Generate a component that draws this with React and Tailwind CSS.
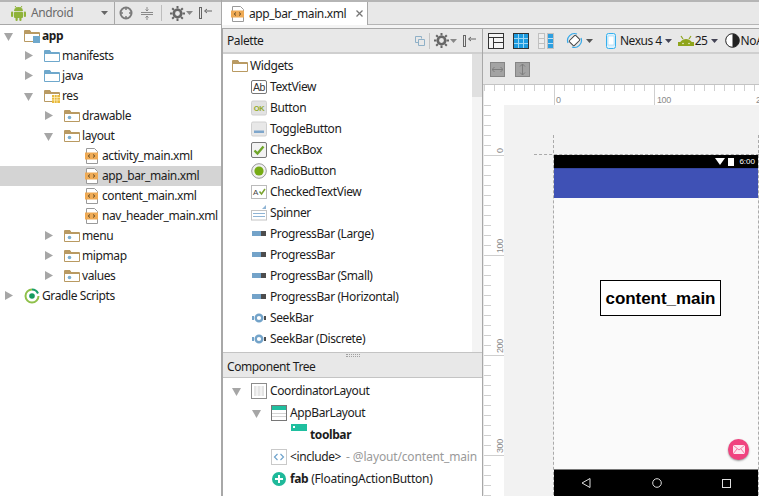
import React from "react";

const FOLDER_BROWN = "#b99a62";

function Arrow({ open }) {
  return (
    <svg width="12" height="12" viewBox="0 0 12 12" className="shrink-0">
      {open ? <path d="M1 3h9l-4.500 8z" fill="#a6a6a6" /> : <path d="M2 1v9l8-4.500z" fill="#a6a6a6" />}
    </svg>
  );
}

function Folder({ color = FOLDER_BROWN, badge }) {
  return (
    <svg width="16" height="14" viewBox="0 0 16 14" className="shrink-0">
      <path d="M.5 1.500h5l1.500 2h8.500v9H.5z" fill="#fff" stroke={color} />
      <path d="M1 1h5l1.500 2.500H15V5H1z" fill={color} />
      {badge === "dot" && <circle cx="5.500" cy="8.500" r="1.800" fill="#7aaed0" />}
      {badge === "square" && <rect x="9" y="7" width="7" height="7" fill="#6fa8cc" />}
      {badge === "grid" && (
        <g>
          <rect x="8" y="6" width="8" height="8" fill="#e8b93c" />
          <path d="M8 8.500h8M8 11h8M10.500 6v8M13 6v8" stroke="#fff3c8" strokeWidth=".7" />
        </g>
      )}
    </svg>
  );
}

function XmlIcon() {
  return (
    <svg width="14" height="16" viewBox="0 0 14 16" className="mr-px shrink-0">
      <path d="M1.500.5h8l3 3v12h-11z" fill="#fff" stroke="#9a9a9a" />
      <rect x="0" y="4.500" width="13" height="7" fill="#eeaa55" />
      <path d="M5 6.500 3.200 8 5 9.500M8 6.500 9.800 8 8 9.500" fill="none" stroke="#4d3b1f" strokeWidth=".9" />
    </svg>
  );
}

function GradleIcon() {
  return (
    <svg width="16" height="16" viewBox="0 0 16 16" className="shrink-0">
      <path d="M8 1.500a6.500 6.500 0 1 0 6.500 6.500" fill="none" stroke="#8fc04a" strokeWidth="2" />
      <path d="M8 1.500a6.500 6.500 0 0 1 6 4" fill="none" stroke="#1a9e6a" strokeWidth="2" />
      <circle cx="8" cy="8" r="2.800" fill="#159a5e" />
    </svg>
  );
}

function AndroidHead() {
  return (
    <svg width="16" height="12" viewBox="0 0 16 12" className="block shrink-0">
      <path d="M1 11a7 7 0 0 1 14 0z" fill="#8fa51c" />
      <path d="M3 1l2 3M13 1l-2 3" stroke="#8fa51c" strokeWidth="1.200" />
      <rect x="0" y="7" width="16" height="4" fill="#8fa51c" />
      <circle cx="5" cy="8.500" r=".7" fill="#fff" />
      <circle cx="11" cy="8.500" r=".7" fill="#fff" />
    </svg>
  );
}

function AndroidFull() {
  return (
    <svg width="15" height="16" viewBox="0 0 15 16" className="shrink-0">
      <path d="M4 1l1.500 2M11 1 9.500 3" stroke="#8fb339" />
      <path d="M3 6a4.500 4 0 0 1 9 0z" fill="#8fb339" />
      <rect x="3" y="6.700" width="9" height="6.300" rx="1" fill="#8fb339" />
      <rect x="0" y="6.500" width="2.200" height="5.500" rx="1" fill="#8fb339" />
      <rect x="12.800" y="6.500" width="2.200" height="5.500" rx="1" fill="#8fb339" />
      <rect x="4.500" y="12" width="2.200" height="4" rx="1" fill="#8fb339" />
      <rect x="8.300" y="12" width="2.200" height="4" rx="1" fill="#8fb339" />
    </svg>
  );
}

function Caret({ color = "#555" }) {
  return (
    <svg width="7" height="4" viewBox="0 0 7 4" className="block shrink-0">
      <path d="M0 0h7L3.500 4z" fill={color} />
    </svg>
  );
}

function Gear() {
  return (
    <svg width="15" height="15" viewBox="0 0 15 15" className="shrink-0">
      <circle cx="7.500" cy="7.500" r="3.700" fill="none" stroke="#666" strokeWidth="2.600" />
      <path d="M7.500 0v15M0 7.500h15M2.200 2.200l10.600 10.600M12.800 2.200 2.200 12.800" stroke="#666" strokeWidth="2" strokeDasharray="2.500 10 2.500" />
    </svg>
  );
}

function PinLeft() {
  return (
    <svg width="14" height="12" viewBox="0 0 14 12" className="block shrink-0">
      <rect x=".5" y=".5" width="2" height="11" fill="none" stroke="#666" />
      <path d="M13 4H6M8 2 5.500 4 8 6" fill="none" stroke="#666" />
    </svg>
  );
}

function TreeRow({ indent, arrow, icon, children, selected, bold }) {
  return (
    <div className={`flex h-5 items-center ${indent} ${selected ? "bg-[#d4d4d4]" : ""}`}>
      {arrow !== undefined && (
        <div className="flex w-[21px] shrink-0 justify-start">
          <Arrow open={arrow} />
        </div>
      )}
      {icon}
      <span className={`ml-[2px] whitespace-nowrap ${bold ? "font-bold" : ""}`}>{children}</span>
    </div>
  );
}

function ProjectPanel() {
  return (
    <aside className="flex w-[222px] shrink-0 flex-col border-r border-[#a8a8a8] bg-white">
      <div className="flex h-[25px] shrink-0 items-center border-b border-[#a8a8a8] border-t-2 border-t-[#b5b5b5] bg-[#e8e8e8] pl-[11px] pr-2">
        <AndroidFull />
        <span className="ml-[5px] w-[74px] text-[#6b6b6b]">Android</span>
        <Caret color="#666" />
        <div className="ml-[6px] h-[23px] w-px bg-[#a8a8a8]" />
        <svg width="14" height="14" viewBox="0 0 14 14" className="ml-[4px] shrink-0">
          <circle cx="7" cy="7" r="5.500" fill="none" stroke="#7b7b7b" strokeWidth="2" />
          <path d="M7 1v3M7 10v3M1 7h3M10 7h3" stroke="#7b7b7b" strokeWidth="1.500" />
        </svg>
        <svg width="12" height="13" viewBox="0 0 12 13" className="ml-[8px] shrink-0">
          <path d="M0 5.500h12M0 7.500h12" stroke="#8a8a8a" />
          <path d="M6 0v3.500M4.500 2.500 6 4l1.500-1.500M6 13V9.500M4.500 10.500 6 9l1.500 1.500" fill="none" stroke="#8a8a8a" />
        </svg>
        <div className="mx-[8px] h-4 w-px bg-[#bdbdbd]" />
        <Gear />
        <span className="ml-[1px]"><Caret color="#888" /></span>
        <span className="ml-[6px]"><PinLeft /></span>
      </div>
      <div className="pt-px text-[#1c1c1c]">
        <TreeRow indent="pl-[3px]" arrow={true} bold icon={<Folder badge="square" />}>app</TreeRow>
        <TreeRow indent="pl-[23px]" arrow={false} icon={<Folder color="#6fa8cc" />}>manifests</TreeRow>
        <TreeRow indent="pl-[23px]" arrow={false} icon={<Folder color="#6fa8cc" />}>java</TreeRow>
        <TreeRow indent="pl-[23px]" arrow={true} icon={<Folder badge="grid" />}>res</TreeRow>
        <TreeRow indent="pl-[43px]" arrow={false} icon={<Folder badge="dot" />}>drawable</TreeRow>
        <TreeRow indent="pl-[43px]" arrow={true} icon={<Folder badge="dot" />}>layout</TreeRow>
        <TreeRow indent="pl-[85px]" icon={<XmlIcon />}>activity_main.xml</TreeRow>
        <TreeRow indent="pl-[85px]" selected icon={<XmlIcon />}>app_bar_main.xml</TreeRow>
        <TreeRow indent="pl-[85px]" icon={<XmlIcon />}>content_main.xml</TreeRow>
        <TreeRow indent="pl-[85px]" icon={<XmlIcon />}>nav_header_main.xml</TreeRow>
        <TreeRow indent="pl-[43px]" arrow={false} icon={<Folder badge="dot" />}>menu</TreeRow>
        <TreeRow indent="pl-[43px]" arrow={false} icon={<Folder badge="dot" />}>mipmap</TreeRow>
        <TreeRow indent="pl-[43px]" arrow={false} icon={<Folder badge="dot" />}>values</TreeRow>
        <TreeRow indent="pl-[3px]" arrow={false} icon={<GradleIcon />}>Gradle Scripts</TreeRow>
      </div>
    </aside>
  );
}

function BoxIcon({ children }) {
  return (
    <svg width="16" height="16" viewBox="0 0 16 16" className="shrink-0">
      {children}
    </svg>
  );
}

function BarIcon() {
  return (
    <BoxIcon>
      <rect x="1" y="5" width="9" height="5" fill="#73a3c9" />
      <rect x="10" y="5" width="5" height="5" fill="#4d4d4d" />
    </BoxIcon>
  );
}

function SeekIcon() {
  return (
    <BoxIcon>
      <rect x="1" y="6" width="2" height="4" fill="#73a3c9" />
      <rect x="13" y="6" width="2" height="4" fill="#4d4d4d" />
      <circle cx="8" cy="8" r="3.300" fill="none" stroke="#73a3c9" strokeWidth="2.400" />
    </BoxIcon>
  );
}

const WIDGETS = [
  ["TextView", <BoxIcon><rect x=".5" y="1.500" width="15" height="13" rx="1.500" fill="#fff" stroke="#777" /><text x="8" y="12" textAnchor="middle" fontSize="10.500" fill="#333" fontFamily="Liberation Sans">Ab</text></BoxIcon>],
  ["Button", <BoxIcon><rect x=".5" y="1" width="15" height="14" rx="1.500" fill="#e2e2e2" stroke="#d0d0d0" /><text x="8" y="11" textAnchor="middle" fontSize="7.500" fontWeight="bold" fill="#93ab2b" fontFamily="Liberation Sans">OK</text></BoxIcon>],
  ["ToggleButton", <BoxIcon><rect x=".5" y="1" width="15" height="14" rx="1.500" fill="#e8e8e8" stroke="#d0d0d0" /><rect x="3" y="9.500" width="10" height="2.500" fill="#7ea6cb" /></BoxIcon>],
  ["CheckBox", <BoxIcon><rect x=".5" y=".5" width="15" height="15" rx="1.500" fill="#f2f2f2" stroke="#777" /><path d="M3.500 8.500 6.500 11.500 12.500 4.500" fill="none" stroke="#6fa52a" strokeWidth="2.400" /></BoxIcon>],
  ["RadioButton", <BoxIcon><circle cx="8" cy="8" r="7.300" fill="#f0f0f0" stroke="#999" /><circle cx="8" cy="8" r="4.600" fill="#76ab14" /></BoxIcon>],
  ["CheckedTextView", <BoxIcon><rect x=".5" y="1.500" width="15" height="13" fill="#fff" stroke="#bbb" /><text x="4.500" y="10.500" textAnchor="middle" fontSize="8" fill="#444" fontFamily="Liberation Sans">A</text><path d="M8.500 7.500 10.500 10 14 5" fill="none" stroke="#7aa32f" strokeWidth="1.500" /></BoxIcon>],
  ["Spinner", <BoxIcon><rect x=".5" y="5.500" width="15" height="9.500" fill="#fff" stroke="#c4c4c4" /><path d="M2 8.500h12M2 11.500h12" stroke="#8fb4d4" /><path d="M15 0v4h-4z" fill="#8fb4d4" /></BoxIcon>],
  ["ProgressBar (Large)", <BarIcon />],
  ["ProgressBar", <BarIcon />],
  ["ProgressBar (Small)", <BarIcon />],
  ["ProgressBar (Horizontal)", <BarIcon />],
  ["SeekBar", <SeekIcon />],
  ["SeekBar (Discrete)", <SeekIcon />],
];

function Palette() {
  return (
    <div className="flex h-[298px] shrink-0 bg-white">
      <div className="flex-1 pt-px text-[#1c1c1c]">
        <div className="flex h-[21px] items-center pl-[9px]">
          <Folder />
          <span className="ml-[2px]">Widgets</span>
        </div>
        {WIDGETS.map(([name, icon]) => (
          <div key={name} className="flex h-[21px] items-center gap-[3px] pl-[28px] whitespace-nowrap">
            {icon}
            <span>{name}</span>
          </div>
        ))}
      </div>
      <div className="w-[10px] shrink-0 bg-[#f4f4f4]">
        <div className="h-[43px] bg-[#e0e0e0]" />
      </div>
    </div>
  );
}

function ComponentTree() {
  return (
    <div className="flex-1 bg-white pt-[2px] text-[#1c1c1c]">
      <div className="flex h-[22px] items-center pl-[8px] whitespace-nowrap">
        <Arrow open />
        <div className="ml-[8px] mr-[3px]">
          <BoxIcon>
            <rect x=".5" y=".5" width="15" height="15" fill="#fff" stroke="#8c8c8c" />
            <rect x="3" y="3" width="10" height="10" fill="#e4e4e4" />
            <path d="M6 3v10M10 3v10" stroke="#fff" />
          </BoxIcon>
        </div>
        <span>CoordinatorLayout</span>
      </div>
      <div className="flex h-[22px] items-center pl-[28px] whitespace-nowrap">
        <Arrow open />
        <div className="ml-[8px] mr-[3px]">
          <BoxIcon>
            <rect x=".5" y=".5" width="15" height="15" fill="#fff" stroke="#777" />
            <rect x="1" y="1" width="14" height="4" fill="#1fbf9f" />
            <path d="M1 8.500h14M1 11.500h14" stroke="#d4d4d4" />
          </BoxIcon>
        </div>
        <span>AppBarLayout</span>
      </div>
      <div className="relative flex h-[22px] items-center pl-[87px] font-bold">
        <div className="absolute left-[68px] top-0 h-[7px] w-[16px] bg-[#1fbf9f]">
          <div className="ml-[2px] mt-[2px] h-[2px] w-[2px] bg-white" />
        </div>
        <span>toolbar</span>
      </div>
      <div className="flex h-[22px] items-center pl-[48px] whitespace-nowrap">
        <BoxIcon>
          <rect x=".5" y=".5" width="15" height="15" fill="#fff" stroke="#c9c9c9" />
          <path d="M6.500 5 3.500 8l3 3M9.500 5l3 3-3 3" fill="none" stroke="#6fa3cc" strokeWidth="1.200" />
        </BoxIcon>
        <span className="ml-[3px]">&lt;include&gt;</span>
        <span className="ml-[5px] tracking-[-0.15px] text-[#9a9a9a]">- @layout/content_main</span>
      </div>
      <div className="flex h-[22px] items-center pl-[48px] whitespace-nowrap">
        <BoxIcon>
          <circle cx="8" cy="8" r="7" fill="#1fb99a" />
          <path d="M8 4v8M4 8h8" stroke="#fff" strokeWidth="2" />
        </BoxIcon>
        <span className="ml-[3px] font-bold">fab</span>
        <span className="ml-[3px] tracking-[-0.25px]">(FloatingActionButton)</span>
      </div>
    </div>
  );
}

function PalettePanel() {
  return (
    <section className="flex w-[261px] shrink-0 flex-col border-x border-t border-[#a8a8a8]">
      <div className="flex h-[25px] shrink-0 items-center border-b-2 border-[#cfcfcf] bg-[#e8e8e8] pl-[4px] pr-[5px] text-[#1c1c1c]">
        <span className="flex-1">Palette</span>
        <svg width="10" height="10" viewBox="0 0 10 10" className="shrink-0">
          <path d="M.5.500h6v2M3.500 3.500h6v6h-6zM.5.500v6h3" fill="none" stroke="#8fb0c7" />
        </svg>
        <div className="mx-[4px] h-4 w-px bg-[#c4c4c4]" />
        <Gear />
        <span className="ml-px mr-[6px]"><Caret color="#888" /></span>
        <PinLeft />
      </div>
      <Palette />
      <div className="flex h-[26px] shrink-0 flex-col border-y border-[#c4c4c4] bg-[#e8e8e8] pl-[4px] text-[#1c1c1c]">
        <div className="flex h-[5px] items-center justify-center pr-[4px]">
          <div className="h-[3px] w-[14px] border-y border-dotted border-[#a0a0a0]" />
        </div>
        <span className="leading-[18px]">Component Tree</span>
      </div>
      <ComponentTree />
    </section>
  );
}

function RulerTop() {
  const ticks = [];
  for (let x = 0.5; x < 275; x += 10) ticks.push(x);
  return (
    <svg width="275" height="20" viewBox="0 0 275 20" className="block shrink-0">
      {ticks.map((x) => (
        <path key={x} d={`M${x} 0V${x === 70.5 || x === 170.5 ? 20 : 6}`} stroke="#cfcfcf" />
      ))}
      <text x="72" y="18" fontSize="9" fill="#8a8a8a" fontFamily="Liberation Sans">0</text>
      <text x="173" y="18" fontSize="9" fill="#8a8a8a" fontFamily="Liberation Sans">100</text>
      <text x="272" y="18" fontSize="9" fill="#8a8a8a" fontFamily="Liberation Sans">200</text>
    </svg>
  );
}

function RulerLeft() {
  const ticks = [];
  for (let y = 0.5; y < 391; y += 10) ticks.push(y);
  const labels = [["0", 50], ["100", 150], ["200", 250], ["300", 350]];
  return (
    <svg width="20" height="391" viewBox="0 0 20 391" className="block shrink-0">
      {ticks.map((y) => (
        <path key={y} d={`M0 ${y}H${(y - 50.5) % 100 === 0 ? 20 : 7}`} stroke="#cfcfcf" />
      ))}
      {labels.map(([t, y]) => (
        <text key={t} transform={`translate(19 ${y - 2}) rotate(-90)`} fontSize="9" fill="#8a8a8a" fontFamily="Liberation Sans">
          {t}
        </text>
      ))}
    </svg>
  );
}

function Phone() {
  return (
    <div className="flex h-[341px] w-[204px] shrink-0 flex-col bg-[#fafafa]">
      <div className="flex h-[13px] shrink-0 items-center justify-end gap-[3px] bg-black pr-[3px] text-[8px] leading-none tracking-normal text-white">
        <svg width="10" height="7" viewBox="0 0 10 7"><path d="M0 0h10L5 7z" fill="#fff" /></svg>
        <div className="h-2 w-[6px] bg-white" />
        <span className="ml-[2px] font-['Liberation_Sans']">6:00</span>
      </div>
      <div className="h-[30px] shrink-0 border-t border-[#3545a0] bg-[#3f51b5]" />
      <div className="flex-1 pl-[46px] pt-[82px]">
        <div className="flex h-[36px] w-[121px] items-center justify-center border border-black bg-white font-['Liberation_Sans'] text-[17px] font-bold tracking-[-0.05px] text-black">
          content_main
        </div>
      </div>
      <div className="flex h-[27px] shrink-0 items-center justify-between border-t border-[#777] bg-black px-[27px]">
        <svg width="10" height="10" viewBox="0 0 10 10"><path d="M9 .5v9L1 5z" fill="none" stroke="#ddd" /></svg>
        <svg width="10" height="10" viewBox="0 0 10 10"><circle cx="5" cy="5" r="4.300" fill="none" stroke="#ddd" /></svg>
        <svg width="9" height="9" viewBox="0 0 9 9"><rect x=".5" y=".5" width="8" height="8" fill="none" stroke="#ddd" /></svg>
      </div>
    </div>
  );
}

function DesignPanel() {
  return (
    <section className="flex min-w-0 flex-1 flex-col border-t border-[#a8a8a8] bg-[#e8e8e8]">
      <div className="flex h-[25px] shrink-0 items-center overflow-hidden border-b-2 border-[#cfcfcf] pl-[5px] whitespace-nowrap text-[#1c1c1c]">
        <svg width="16" height="16" viewBox="0 0 16 16" className="shrink-0">
          <rect x=".5" y=".5" width="15" height="15" fill="#f4f4f4" stroke="#333" />
          <path d="M.5 4.500h15M5.500 4.500v11M5.500 9.500h10" stroke="#333" />
        </svg>
        <svg width="16" height="16" viewBox="0 0 16 16" className="ml-[9px] shrink-0">
          <rect x=".5" y=".5" width="15" height="15" fill="#1c9be0" stroke="#333" />
          <path d="M5.500 1v14M10.500 1v14M1 5.500h14M1 10.500h14" stroke="#9dd8f5" />
        </svg>
        <svg width="16" height="16" viewBox="0 0 16 16" className="ml-[9px] shrink-0">
          <rect x=".5" y=".5" width="6" height="15" fill="#eee" stroke="#c0c0c0" />
          <rect x="9.500" y=".5" width="6" height="15" fill="#2d9fe0" stroke="#c0c0c0" />
          <path d="M1 5.500h5M1 10.500h5" stroke="#c0c0c0" />
          <path d="M10 5.500h5M10 10.500h5" stroke="#bfe2f7" />
        </svg>
        <div className="ml-[8px] h-[20px] w-px bg-[#c4c4c4]" />
        <svg width="17" height="17" viewBox="0 0 17 17" className="ml-[4px] shrink-0">
          <path d="M2 11A7 7 0 0 1 11 2M15 6a7 7 0 0 1-9 9" fill="none" stroke="#35a8e8" strokeWidth="1.200" />
          <rect x="5" y="4" width="7" height="9" rx="1" transform="rotate(45 8.500 8.500)" fill="#fff" stroke="#444" />
        </svg>
        <span className="ml-[3px]"><Caret /></span>
        <div className="ml-[4px] h-[20px] w-px bg-[#c4c4c4]" />
        <svg width="10" height="16" viewBox="0 0 10 16" className="ml-[9px] shrink-0">
          <rect x=".5" y=".5" width="9" height="15" rx="2" fill="#dff2fd" stroke="#35b0ee" />
          <rect x="2" y="3" width="6" height="9" fill="#fff" stroke="#7ecbf3" strokeWidth=".5" />
        </svg>
        <span className="ml-[4px] tracking-[-0.5px]">Nexus 4</span>
        <span className="ml-[3px]"><Caret color="#445" /></span>
        <span className="ml-[6px]"><AndroidHead /></span>
        <span className="ml-px">25</span>
        <span className="ml-[3px]"><Caret color="#445" /></span>
        <svg width="15" height="15" viewBox="0 0 15 15" className="ml-[7px] shrink-0">
          <circle cx="7.500" cy="7.500" r="6.800" fill="#fff" stroke="#222" />
          <path d="M7.500.7a6.800 6.800 0 0 1 0 13.600z" fill="#222" />
        </svg>
        <span className="ml-px">NoA</span>
      </div>
      <div className="flex h-[31px] shrink-0 items-center gap-[10px] border-b border-[#c4c4c4] pl-[7px]">
        <div className="flex h-[15px] w-[15px] items-center justify-center border border-[#858585] bg-[#a3a3a3]">
          <svg width="11" height="7" viewBox="0 0 11 7"><path d="M0 3.500h11M2.500 1 0 3.500 2.500 6M8.500 1 11 3.500 8.500 6" fill="none" stroke="#7d7d7d" /></svg>
        </div>
        <div className="flex h-[15px] w-[15px] items-center justify-center border border-[#858585] bg-[#a3a3a3]">
          <svg width="7" height="11" viewBox="0 0 7 11"><path d="M3.500 0v11M1 2.500 3.500 0 6 2.500M1 8.500 3.500 11 6 8.500" fill="none" stroke="#7d7d7d" /></svg>
        </div>
      </div>
      <div className="flex min-h-0 flex-1 flex-col pl-px">
        <div className="h-[20px] shrink-0 bg-white">
          <RulerTop />
        </div>
        <div className="flex min-h-0 flex-1">
          <div className="h-[391px] w-[20px] shrink-0 bg-white">
            <RulerLeft />
          </div>
          <div className="relative flex-1 overflow-hidden bg-[#f2f2f2] pl-[50px] pt-[50px]">
            <div className="absolute left-[49px] top-[30px] h-[360px] border-l border-dashed border-[#aaa]" />
            <div className="absolute left-[254px] top-[30px] h-[360px] border-l border-dashed border-[#aaa]" />
            <div className="absolute left-[30px] top-[49px] w-[225px] border-t border-dashed border-[#aaa]" />
            <Phone />
            <div className="absolute left-[224px] top-[334px] flex h-[21px] w-[21px] items-center justify-center rounded-full bg-[#f0437f] shadow-[0_1px_2px_rgba(0,0,0,0.4)]">
              <svg width="12" height="9" viewBox="0 0 12 9">
                <rect width="12" height="9" fill="#fde6ee" />
                <path d="M0 0l6 5 6-5M0 9l4-5M12 9 8 4" fill="none" stroke="#f0437f" strokeWidth=".7" />
              </svg>
            </div>
          </div>
        </div>
      </div>
    </section>
  );
}

export default function App() {
  return (
    <div className="flex h-[496px] w-[759px] overflow-hidden bg-[#e8e8e8] font-['Noto_Sans',sans-serif] text-[12px] leading-none tracking-[-0.4px]">
      <ProjectPanel />
      <div className="flex min-w-0 flex-1 flex-col">
        <div className="h-[28px] shrink-0 bg-[#f4f4f4]">
          <div className="flex h-[25px] items-start border-t-2 border-b border-[#b5b5b5] bg-[#e8e8e8]">
            <div className="flex h-[23px] w-[146px] items-center gap-[3px] border-r border-[#a8a8a8] bg-white pl-[9px] text-[#1c1c1c]">
              <XmlIcon />
              <span>app_bar_main.xml</span>
              <svg width="7" height="7" viewBox="0 0 7 7" className="ml-[7px]"><path d="M.5.500l6 6M6.500.5l-6 6" stroke="#777" strokeWidth="1.300" /></svg>
            </div>
          </div>
        </div>
        <div className="flex min-h-0 flex-1">
          <PalettePanel />
          <DesignPanel />
        </div>
      </div>
    </div>
  );
}
